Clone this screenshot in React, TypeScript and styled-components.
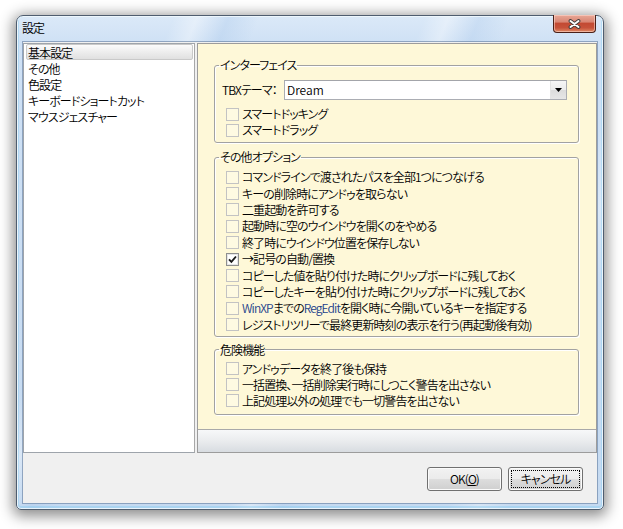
import React from "react";
import styled, { createGlobalStyle } from "styled-components";

const Global = createGlobalStyle`
  html, body { margin: 0; padding: 0; background: #ffffff; }
  body {
    font-family: "Noto Sans CJK JP", "Noto Sans", sans-serif;
    font-size: 12px;
    font-weight: 350;
    color: #000;
    font-feature-settings: "palt";
    letter-spacing: -0.9px;
  }
  * { box-sizing: border-box; }
`;

const Desktop = styled.div`
  width: 623px;
  height: 529px;
  padding: 15px 0 0 16px;
  display: flex;
  align-items: flex-start;
  background: #fff;
  overflow: hidden;
`;

const Window = styled.div`
  width: 588px;
  height: 495px;
  display: flex;
  flex-direction: column;
  border: 1px solid #4f5d6f;
  border-radius: 7px 7px 5px 5px;
  padding: 0 6px 6px 6px;
  background:
    linear-gradient(112deg,
      transparent 0 20%,
      rgba(255,255,255,0.35) 23%,
      rgba(170,200,235,0.35) 27%,
      transparent 31%,
      transparent 52%,
      rgba(255,255,255,0.35) 55%,
      rgba(170,200,235,0.3) 59%,
      transparent 63%,
      transparent 80%,
      rgba(255,255,255,0.3) 84%,
      transparent 88%),
    linear-gradient(to bottom, #dbe9f8 0, #cfe1f5 26px, #c5daf1 100%);
  box-shadow: 0 3px 14px 3px rgba(0, 0, 0, 0.45), inset 0 0 0 1px rgba(255, 255, 255, 0.75),
    inset 0 -1px 0 2px rgba(120, 200, 240, 0.35);
`;

const TitleBar = styled.div`
  height: 26px;
  display: flex;
  justify-content: space-between;
  align-items: flex-start;
`;

const Title = styled.div`
  margin-top: 4px;
  margin-left: -1px;
  font-size: 12px;
  line-height: 16px;
  color: #000;
`;

const CloseButton = styled.div`
  width: 43px;
  height: 18px;
  margin-top: -1px;
  margin-right: 1px;
  display: flex;
  align-items: center;
  justify-content: center;
  border: 1px solid #4a2018;
  border-top: none;
  border-radius: 0 0 4px 4px;
  background: linear-gradient(to bottom, #e9a897 0%, #d98775 40%, #c34a33 50%, #c6523a 75%, #e08a65 100%);
  box-shadow: inset 0 0 0 1px rgba(255, 220, 210, 0.55);
`;

const Client = styled.div`
  height: 461px;
  display: flex;
  flex-direction: column;
  background: #f0f0f0;
  box-shadow: 0 0 0 1px rgba(90, 115, 150, 0.55);
`;

const TopArea = styled.div`
  height: 410px;
  margin-top: 1px;
  display: flex;
  gap: 2px;
`;

const List = styled.div`
  width: 172px;
  background: #fff;
  border: 1px solid #9ea4ab;
  border-right-color: #a8a8a8;
  padding: 0 1px 0 2px;
  display: flex;
  flex-direction: column;
`;

const ListItem = styled.div<{ $selected?: boolean }>`
  height: 16px;
  line-height: 15px;
  padding-left: 1px;
  border: 1px solid ${(p) => (p.$selected ? "#c9c9c9" : "transparent")};
  border-radius: 2px;
  background: ${(p) =>
    p.$selected ? "linear-gradient(to bottom, #fbfbfb 0%, #ececec 55%, #e0e0e0 100%)" : "transparent"};
  white-space: nowrap;
`;

const Panel = styled.div`
  flex: 1;
  display: flex;
  flex-direction: column;
  border: 1px solid #9c9c9c;
`;

const Sheet = styled.div`
  flex: 1;
  background: #fef8d8;
  border-bottom: 1px solid #a9a9a9;
  padding: 14px 17px 0 16px;
  display: flex;
  flex-direction: column;
`;

const Strip = styled.div`
  height: 22px;
  background: linear-gradient(to bottom, #f7f8f9 0%, #eaecee 50%, #d8dce1 100%);
`;

const Group = styled.fieldset<{ $gap?: number }>`
  margin: ${(p) => p.$gap ?? 0}px 0 0 0;
  padding: 0;
  min-width: 0;
  border: 1px solid #a2a2a2;
  border-radius: 3px;
  box-shadow: inset 1px 1px 0 #ffffff, 1px 1px 0 #ffffff;
`;

const Legend = styled.legend`
  margin-left: 4px;
  padding: 0 1px;
  font-size: 12px;
  line-height: 14px;
  white-space: nowrap;
`;

const GroupBody = styled.div<{ $pad: string }>`
  padding: ${(p) => p.$pad};
  display: flex;
  flex-direction: column;
`;

const SelectRow = styled.div`
  display: flex;
  align-items: center;
  height: 20px;
  margin-bottom: 6px;
`;

const SelectLabel = styled.div`
  width: 62px;
  line-height: 16px;
  white-space: nowrap;
`;

const SelectBox = styled.div`
  flex: 1;
  height: 20px;
  display: flex;
  align-items: center;
  justify-content: space-between;
  background: #fff;
  border: 1px solid #abadb3;
  border-top-color: #a3a5aa;
  padding-left: 2px;
`;

const SelectText = styled.span`
  line-height: 16px;
  letter-spacing: 0;
`;

const DropButton = styled.div`
  width: 16px;
  height: 18px;
  display: flex;
  align-items: center;
  justify-content: center;
  background: linear-gradient(to bottom, #f6f6f6 0%, #ebebeb 50%, #dcdcdc 51%, #e6e6e6 100%);
  border-left: 1px solid #e3e3e3;
`;

const Row = styled.div<{ $h?: number; $indent?: number }>`
  height: ${(p) => p.$h ?? 16}px;
  display: flex;
  align-items: center;
  gap: 3px;
  margin-left: ${(p) => p.$indent ?? 0}px;
  white-space: nowrap;
  line-height: 16px;
`;

const Box = styled.span<{ $checked?: boolean }>`
  width: 13px;
  height: 13px;
  flex: none;
  display: flex;
  align-items: center;
  justify-content: center;
  border: 1px solid ${(p) => (p.$checked ? "#8e8f8f" : "#c3c3c3")};
  background: ${(p) => (p.$checked ? "#ffffff" : "rgba(255,255,255,0.25)")};
  box-shadow: ${(p) => (p.$checked ? "inset 0 0 0 1px #e6e6e6" : "none")};
`;

const Blue = styled.span`
  color: #23418a;
`;

const BottomArea = styled.div`
  height: 50px;
  display: flex;
  justify-content: flex-end;
  align-items: flex-start;
  gap: 6px;
  padding: 14px 14px 0 0;
`;

const Button = styled.div`
  width: 75px;
  height: 24px;
  display: flex;
  align-items: center;
  justify-content: center;
  border: 1px solid #707070;
  border-radius: 3px;
  background: linear-gradient(to bottom, #f2f2f2 0%, #ebebeb 48%, #dddddd 52%, #cfcfcf 100%);
  box-shadow: inset 0 0 0 1px #fbfbfb;
  padding: 2px;
`;

const ButtonFace = styled.div<{ $focus?: boolean }>`
  width: 100%;
  height: 100%;
  display: flex;
  align-items: center;
  justify-content: center;
  border: 1px dotted ${(p) => (p.$focus ? "#000" : "transparent")};
  line-height: 16px;
`;

const Under = styled.span`
  text-decoration: underline;
`;

const Check = ({ checked }: { checked?: boolean }) => (
  <Box $checked={checked}>
    {checked && (
      <svg width="9" height="9" viewBox="0 0 9 9">
        <path d="M1 4.3 L3.4 6.8 L8 1.5" fill="none" stroke="#1a1a1a" strokeWidth="1.9" />
      </svg>
    )}
  </Box>
);

const CheckRow = ({
  label,
  checked,
  h,
  indent,
}: {
  label: React.ReactNode;
  checked?: boolean;
  h?: number;
  indent?: number;
}) => (
  <Row $h={h} $indent={indent}>
    <Check checked={checked} />
    <span>{label}</span>
  </Row>
);

const otherOptions: { label: React.ReactNode; checked?: boolean }[] = [
  { label: "コマンドラインで渡されたパスを全部1つにつなげる" },
  { label: "キーの削除時にアンドゥを取らない" },
  { label: "二重起動を許可する" },
  { label: "起動時に空のウインドウを開くのをやめる" },
  { label: "終了時にウインドウ位置を保存しない" },
  { label: "→記号の自動/置換", checked: true },
  { label: "コピーした値を貼り付けた時にクリップボードに残しておく" },
  { label: "コピーしたキーを貼り付けた時にクリップボードに残しておく" },
  {
    label: (
      <>
        <Blue>WinXP</Blue>までの<Blue>RegEdit</Blue>を開く時に今開いているキーを指定する
      </>
    ),
  },
  { label: "レジストリツリーで最終更新時刻の表示を行う(再起動後有効)" },
];

const dangerOptions = [
  "アンドゥデータを終了後も保持",
  "一括置換、一括削除実行時にしつこく警告を出さない",
  "上記処理以外の処理でも一切警告を出さない",
];

const categories = ["基本設定", "その他", "色設定", "キーボードショートカット", "マウスジェスチャー"];

export default function App() {
  return (
    <>
      <Global />
      <Desktop>
        <Window>
          <TitleBar>
            <Title>設定</Title>
            <CloseButton>
              <svg width="13" height="10" viewBox="0 0 13 10">
                <path d="M2.5 2 L10.5 8 M10.5 2 L2.5 8" stroke="#3b3b3b" strokeWidth="3.8" strokeLinecap="round" fill="none" />
                <path d="M2.5 2 L10.5 8 M10.5 2 L2.5 8" stroke="#ffffff" strokeWidth="2" strokeLinecap="round" fill="none" />
              </svg>
            </CloseButton>
          </TitleBar>
          <Client>
            <TopArea>
              <List>
                {categories.map((c, i) => (
                  <ListItem key={c} $selected={i === 0}>
                    {c}
                  </ListItem>
                ))}
              </List>
              <Panel>
                <Sheet>
                  <Group>
                    <Legend>インターフェイス</Legend>
                    <GroupBody $pad="8px 11px 4px 7px">
                      <SelectRow>
                        <SelectLabel>TBXテーマ：</SelectLabel>
                        <SelectBox>
                          <SelectText>Dream</SelectText>
                          <DropButton>
                            <svg width="7" height="4" viewBox="0 0 7 4">
                              <path d="M0 0 H7 L3.5 4 Z" fill="#000" />
                            </svg>
                          </DropButton>
                        </SelectBox>
                      </SelectRow>
                      <CheckRow indent={4} label="スマートドッキング" />
                      <CheckRow indent={4} label="スマートドラッグ" />
                    </GroupBody>
                  </Group>
                  <Group $gap={7}>
                    <Legend>その他オプション</Legend>
                    <GroupBody $pad="5px 11px 3px 11px">
                      {otherOptions.map((o, i) => (
                        <CheckRow key={i} h={16.4} label={o.label} checked={o.checked} />
                      ))}
                    </GroupBody>
                  </Group>
                  <Group $gap={6}>
                    <Legend>危険機能</Legend>
                    <GroupBody $pad="4px 11px 5px 11px">
                      {dangerOptions.map((d) => (
                        <CheckRow key={d} label={d} />
                      ))}
                    </GroupBody>
                  </Group>
                </Sheet>
                <Strip />
              </Panel>
            </TopArea>
            <BottomArea>
              <Button>
                <ButtonFace>
                  OK(<Under>O</Under>)
                </ButtonFace>
              </Button>
              <Button>
                <ButtonFace $focus>キャンセル</ButtonFace>
              </Button>
            </BottomArea>
          </Client>
        </Window>
      </Desktop>
    </>
  );
}
